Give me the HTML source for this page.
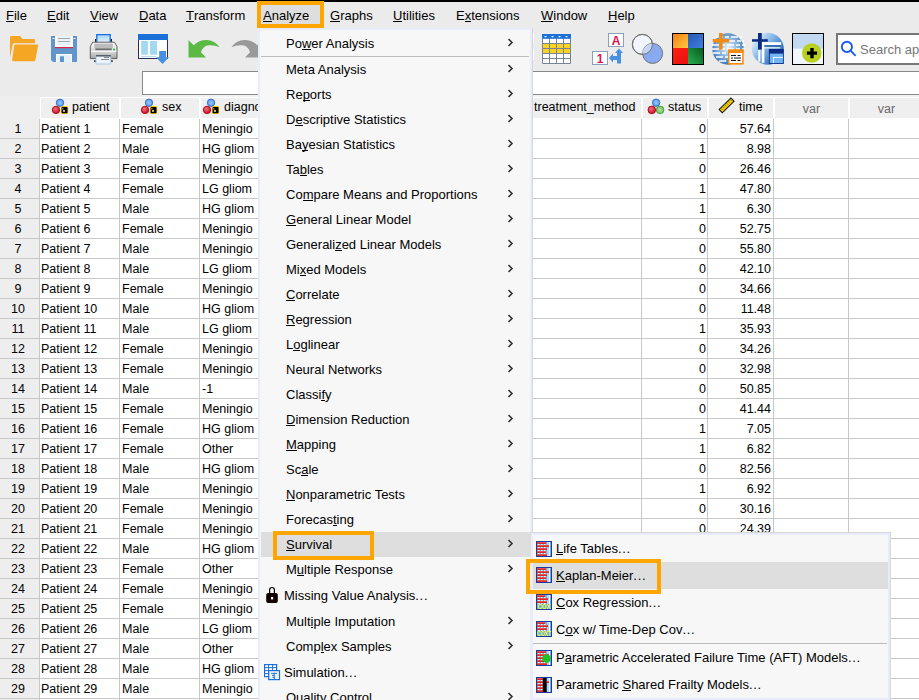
<!DOCTYPE html>
<html><head><meta charset="utf-8"><style>
*{box-sizing:border-box}
html,body{margin:0;padding:0}
body{width:919px;height:700px;overflow:hidden;position:relative;background:#ebebeb;font-family:"Liberation Sans",sans-serif;color:#000}
.a{position:absolute}
u{text-decoration:none;position:relative}u::after{content:"";position:absolute;left:0;right:0;height:1px;background:#000;top:13px}
.mb{position:absolute;top:8px;font-size:13px;line-height:15px;white-space:nowrap}
.gl{position:absolute;background:#c8c8c8}
.c{position:absolute;font-size:12.5px;line-height:14px;white-space:nowrap}
.hd{position:absolute;top:98px;height:20px;background:#efefef}
.mi{position:absolute;left:286px;font-size:13px;line-height:15px;white-space:nowrap}
.ch{position:absolute;left:507px;width:7px;height:9px}
.si{position:absolute;left:556px;font-size:13px;line-height:15px;white-space:nowrap}
</style></head><body>
<div class="a" style="left:0;top:0;width:919px;height:2px;background:#000"></div>

<div class="mb" style="left:6px"><u>F</u>ile</div>
<div class="mb" style="left:47px"><u>E</u>dit</div>
<div class="mb" style="left:90px"><u>V</u>iew</div>
<div class="mb" style="left:139px"><u>D</u>ata</div>
<div class="mb" style="left:186px"><u>T</u>ransform</div>
<div class="mb" style="left:330px"><u>G</u>raphs</div>
<div class="mb" style="left:393px"><u>U</u>tilities</div>
<div class="mb" style="left:456px">E<u>x</u>tensions</div>
<div class="mb" style="left:541px"><u>W</u>indow</div>
<div class="mb" style="left:608px"><u>H</u>elp</div>
<div class="a" style="left:257px;top:1px;width:67px;height:27px;border:4px solid #ffa500;background:#dedede"></div>
<div class="mb" style="left:263px"><u>A</u>nalyze</div>

<svg class="a" style="left:0;top:0" width="919" height="100" viewBox="0 0 919 100">
<defs>
<linearGradient id="pg" x1="0" y1="0" x2="0" y2="1"><stop offset="0" stop-color="#9fd0f8"/><stop offset="1" stop-color="#f4faff"/></linearGradient>
<linearGradient id="pb" x1="0" y1="0" x2="0" y2="1"><stop offset="0" stop-color="#fcfcfc"/><stop offset="0.45" stop-color="#e0e0e0"/><stop offset="0.6" stop-color="#d4d4d4"/><stop offset="1" stop-color="#a4a4a4"/></linearGradient>
<linearGradient id="g1" x1="0" y1="0" x2="1" y2="1"><stop offset="0" stop-color="#f08010"/><stop offset="1" stop-color="#ffc840"/></linearGradient>
<linearGradient id="g2" x1="0" y1="0" x2="1" y2="1"><stop offset="0" stop-color="#2858b0"/><stop offset="1" stop-color="#3c80e0"/></linearGradient>
<linearGradient id="g3" x1="0" y1="0" x2="1" y2="1"><stop offset="0" stop-color="#ff2010"/><stop offset="1" stop-color="#e81010"/></linearGradient>
<linearGradient id="g4" x1="0" y1="1" x2="1" y2="0"><stop offset="0" stop-color="#28b050"/><stop offset="1" stop-color="#0a5a20"/></linearGradient>
<radialGradient id="gl1" cx="0.5" cy="0.45" r="0.6"><stop offset="0" stop-color="#e8f2fc"/><stop offset="0.6" stop-color="#7aa8d8"/><stop offset="1" stop-color="#2a64a8"/></radialGradient>
<linearGradient id="gl2" x1="0.1" y1="0.2" x2="0.9" y2="0.8"><stop offset="0" stop-color="#d8ecfc"/><stop offset="0.45" stop-color="#7cb0e4"/><stop offset="1" stop-color="#2060b0"/></linearGradient>
<radialGradient id="bb" cx="0.35" cy="0.3" r="0.7"><stop offset="0" stop-color="#c8e4ff"/><stop offset="1" stop-color="#3c7ed8"/></radialGradient>
<radialGradient id="rb" cx="0.35" cy="0.3" r="0.7"><stop offset="0" stop-color="#ff8080"/><stop offset="1" stop-color="#c01018"/></radialGradient>
<radialGradient id="gb" cx="0.35" cy="0.3" r="0.7"><stop offset="0" stop-color="#b8f0a0"/><stop offset="1" stop-color="#40a030"/></radialGradient>
</defs>
<!-- folder -->
<path d="M10 37.2 Q10 36 11.2 36 L19.5 36 Q20.3 36 20.8 36.8 L22.3 39 L33.8 39 Q35 39 35 40.2 L35 43.2 L14.2 43.2 Q13 43.2 12.7 44.4 L10 57.5 Z" fill="#f5a623"/>
<path d="M15.3 44.6 L37.2 44.6 Q38.3 44.6 38.1 45.7 L35.4 60 Q35.2 61.2 34 61.2 L13 61.2 Q11.9 61.2 12.1 60.1 L14.2 45.6 Q14.4 44.6 15.3 44.6 Z" fill="#f5a623"/>
<!-- save -->
<path d="M51 36 L77 36 L77 62 L53 62 L51 60 Z" fill="#6096cc"/>
<rect x="55" y="36" width="18" height="11.3" fill="#fff"/>
<rect x="57" y="36" width="14" height="9.5" fill="#e8f2fc"/>
<rect x="58" y="38" width="12" height="1" fill="#a8a8a8"/>
<rect x="58" y="41" width="12" height="1" fill="#a8a8a8"/>
<rect x="55" y="47" width="18" height="1.2" fill="#d8284a"/>
<rect x="52.5" y="38" width="2" height="1" fill="#e8f0f8"/>
<rect x="73.5" y="38" width="2" height="1" fill="#e8f0f8"/>
<rect x="56" y="54" width="16" height="8" fill="#fff"/>
<rect x="57" y="55" width="14" height="7" fill="#e4f0fc"/>
<rect x="60" y="56.3" width="4" height="5.7" fill="#5d94cc"/>
<!-- printer -->
<rect x="95" y="39" width="17" height="2.7" fill="#111"/>
<rect x="96.2" y="34.2" width="14.4" height="10" fill="url(#pg)"/>
<path d="M96.8 44 V34.7 H110.2 V44" fill="none" stroke="#1070e0" stroke-width="1.3"/>
<path d="M92.6 42.2 L114.5 42.2 L117 46.6 L117 58.6 L90.3 58.6 L90.3 46.6 Z" fill="url(#pb)" stroke="#505050" stroke-width="0.9" stroke-linejoin="round"/>
<rect x="94.3" y="43.6" width="18.5" height="4.4" fill="#bcbcbc"/>
<rect x="91" y="48.3" width="4.3" height="2" fill="#dadada"/>
<rect x="95.3" y="48.3" width="16.5" height="2" fill="#707070"/>
<rect x="113" y="48.6" width="2" height="1.9" fill="#30c040"/>
<rect x="91" y="50.7" width="25.5" height="1.2" fill="#fafafa"/>
<rect x="94" y="60.4" width="1.8" height="1.4" fill="#111"/>
<rect x="111" y="60.4" width="1.8" height="1.4" fill="#111"/>
<rect x="96" y="55.3" width="14.8" height="8.7" fill="#eaf4fc" stroke="#a0c0e0" stroke-width="0.8"/>
<rect x="96" y="55.2" width="14.8" height="1.3" fill="#404850"/>
<rect x="104" y="57" width="5" height="0.9" fill="#7a7a7a"/>
<rect x="101.1" y="59" width="7.8" height="0.9" fill="#7a7a7a"/>
<!-- data editor -->
<rect x="138.5" y="39.5" width="29" height="19" fill="#fbfdfd" stroke="#2e2a5e" stroke-width="1"/>
<rect x="138" y="34" width="30" height="6" fill="#1a6fd8"/>
<rect x="141.2" y="41" width="6.7" height="13.7" fill="#a2d8f0"/>
<rect x="150" y="41" width="7" height="13.7" fill="#a2d8f0"/>
<rect x="141.2" y="56.2" width="15" height="0.9" fill="#a2d8f0"/>
<path d="M159.2 51 L166 51 L166 57.3 L169 57.3 L162.5 64 L156 57.3 L159.2 57.3 Z" fill="#4a90e2"/>
<!-- undo -->
<path d="M188.5 40.3 L193.8 45.2 C197 41.8 201.5 40 206.5 40 C211.8 40 216.8 43 219.5 47.3 C215.5 45.3 211 44.6 207 45.6 C204 46.4 202 49 201 52.3 L206 57.6 L188.5 57.6 Z" fill="#5cb946"/>
<!-- redo -->
<path d="M262.5 40.3 L257.2 45.2 C254 41.8 249.5 40 244.5 40 C239.2 40 234.2 43 231.5 47.3 C235.5 45.3 240 44.6 244 45.6 C247 46.4 249 49 250 52.3 L245 57.6 L262.5 57.6 Z" fill="#999"/>
<!-- table icon -->
<rect x="542" y="34" width="29" height="30" fill="#fff"/>
<g fill="#f9d423"><rect x="543" y="44" width="6" height="4"/><rect x="550" y="44" width="6" height="4"/><rect x="557" y="44" width="6" height="4"/><rect x="564" y="44" width="6" height="4"/>
<rect x="543" y="49" width="6" height="4"/><rect x="550" y="49" width="6" height="4"/><rect x="557" y="49" width="6" height="4"/><rect x="564" y="49" width="6" height="4"/></g>
<g stroke="#7a8494" stroke-width="1" fill="none">
<path d="M542.5 38.5 V63.5 H570.5 V38.5 M549.5 38.5 V63.5 M556.5 38.5 V63.5 M563.5 38.5 V63.5 M542.5 43.5 H570.5 M542.5 48.5 H570.5 M542.5 53.5 H570.5 M542.5 58.5 H570.5"/></g>
<rect x="542" y="34" width="29" height="4.8" fill="#1a6fd8"/>
<g fill="#fff"><path d="M544 36 h3 l-1.5 1.5z"/><path d="M551 36 h3 l-1.5 1.5z"/><path d="M558 36 h3 l-1.5 1.5z"/><path d="M565 36 h3 l-1.5 1.5z"/></g>
<!-- 1/A -->
<rect x="608.5" y="33.5" width="15" height="13" fill="#fff" stroke="#8aa0b8"/>
<text x="616" y="44.5" font-family="Liberation Sans" font-weight="bold" font-size="12" fill="#dc1450" text-anchor="middle">A</text>
<rect x="592.5" y="51.5" width="15" height="13" fill="#fff" stroke="#8aa0b8"/>
<text x="600" y="62.5" font-family="Liberation Sans" font-weight="bold" font-size="12" fill="#dc1450" text-anchor="middle">1</text>
<path d="M619 48.5 L623 53 L621 53 L621 63.5 L617 63.5 L617 60 L613 60 L613 62.5 L609 58 L613 53.5 L613 56 L617 56 L617 53 L615 53 Z" fill="#4a90e2"/>
<!-- venn -->
<circle cx="642.4" cy="44.4" r="10" fill="#f2f5fc" stroke="#707070" stroke-width="1"/>
<circle cx="652.6" cy="53.4" r="10" fill="#88aaee" stroke="#707070" stroke-width="1"/>
<path d="M642.65 54.4 A10 10 0 0 1 652.35 43.4 A10 10 0 0 1 642.65 54.4 Z" fill="#c4d6f4"/>
<circle cx="642.4" cy="44.4" r="10" fill="none" stroke="#707070" stroke-width="1"/>
<!-- colors -->
<rect x="672" y="33" width="32" height="32" fill="#000"/>
<rect x="673" y="34" width="15" height="14" fill="url(#g1)"/>
<rect x="688" y="34" width="15" height="14" fill="url(#g2)"/>
<rect x="673" y="48" width="15" height="16" fill="url(#g3)"/>
<rect x="688" y="48" width="15" height="16" fill="url(#g4)"/>
<!-- globe 1 -->
<circle cx="728" cy="49" r="15.7" fill="url(#gl1)"/>
<g stroke="#fff" stroke-width="1.3" stroke-dasharray="7 2 4 2">
<path d="M716 37 H742 M713 41 H744 M712 45 H745 M712 49 H745 M713 53 H744 M716 57 H741 M719 61 H737"/></g>
<rect x="719" y="33" width="3.6" height="16.5" fill="#f58a10"/>
<rect x="712.8" y="39" width="16.5" height="3.4" fill="#f58a10"/>
<rect x="728" y="49.3" width="15.7" height="15.3" fill="#f58a10"/>
<rect x="729.5" y="53" width="12.7" height="10" fill="#fff"/>
<g fill="#111"><rect x="731" y="55" width="5" height="1"/><rect x="737.5" y="55" width="3" height="1"/><rect x="731" y="57.5" width="2" height="1"/><rect x="734" y="57.5" width="7" height="1"/><rect x="731" y="60" width="5" height="1"/><rect x="737.5" y="60" width="3" height="1"/></g>
<!-- globe 2 -->
<circle cx="767.8" cy="48.7" r="16" fill="url(#gl2)"/>
<rect x="758.3" y="50" width="2" height="11.5" fill="#fff"/>
<rect x="761.8" y="42.2" width="19.4" height="2.8" fill="#fff"/>
<rect x="761.8" y="42.2" width="2.6" height="20.6" fill="#fff"/>
<rect x="764.4" y="45.2" width="16.6" height="1.5" fill="#2c64b0"/>
<rect x="764.4" y="47.3" width="16" height="1.1" fill="#fff"/>
<rect x="758" y="33" width="3.8" height="16.5" fill="#0c2c84"/>
<rect x="752" y="39.2" width="15.8" height="2.5" fill="#0c2c84"/>
<rect x="768.9" y="49" width="14.9" height="15" fill="#0c2c84"/>
<rect x="769.8" y="53.6" width="13.1" height="9.5" fill="#70b4f4"/>
<rect x="773" y="56.9" width="9.9" height="1.1" fill="#e8f4ff"/>
<rect x="773" y="56.9" width="1" height="6.2" fill="#e8f4ff"/>
<!-- add -->
<rect x="792.5" y="33.5" width="31" height="31" fill="#f0f6fc" stroke="#000"/>
<rect x="793" y="34" width="30" height="14.6" fill="#c2d8f0"/>
<circle cx="811.8" cy="53" r="9.8" fill="#b8d020"/>
<path d="M810.3 48 h3.4 v3.4 h3.4 v3.4 h-3.4 v3.4 h-3.4 v-3.4 h-3.4 v-3.4 h3.4 Z" fill="#000"/>
<!-- search -->
<rect x="837" y="34" width="90" height="30" fill="#fff" stroke="#777" stroke-width="2"/>
<circle cx="846.9" cy="46.9" r="5.1" fill="none" stroke="#1a5cf0" stroke-width="1.9"/>
<path d="M850.6 50.6 L855.6 55.8" stroke="#1a5cf0" stroke-width="1.9"/>
</svg>

<div class="a" style="left:533px;top:33px;width:1px;height:10px;background:#fff"></div>
<div class="a" style="left:533px;top:49px;width:1px;height:11px;background:#fff"></div>
<div class="a" style="left:860px;top:42px;font-size:13px;line-height:15px;color:#777;white-space:nowrap">Search ap</div>
<div class="a" style="left:142px;top:71px;width:800px;height:24px;background:#fff;border:1px solid #888;border-right:none"></div>
<div class="a" style="left:143px;top:95px;width:776px;height:2px;background:#f2f2f2"></div>
<div class="a" style="left:0;top:96px;width:40px;height:604px;background:#eeeeee"></div>
<div class="a" style="left:40px;top:97px;width:879px;height:603px;background:#fff"></div>
<div class="hd" style="left:41px;width:78px"></div>
<div class="hd" style="left:121px;width:78px"></div>
<div class="hd" style="left:201px;width:78px"></div>
<div class="hd" style="left:281px;width:360px"></div>
<div class="hd" style="left:643px;width:64px"></div>
<div class="hd" style="left:709px;width:64px"></div>
<div class="hd" style="left:775px;width:73px"></div>
<div class="hd" style="left:850px;width:80px"></div>
<div class="c" style="left:72px;top:100px">patient</div>
<div class="c" style="left:162px;top:100px">sex</div>
<div class="c" style="left:224px;top:100px">diagnosis</div>
<div class="c" style="left:534px;top:100px">treatment_method</div>
<div class="c" style="left:668px;top:100px">status</div>
<div class="c" style="left:739px;top:100px">time</div>
<div class="c" style="left:775px;width:73px;text-align:center;top:102px;color:#6a6a6a">var</div>
<div class="c" style="left:850px;width:73px;text-align:center;top:102px;color:#6a6a6a">var</div>

<svg class="a" style="left:0;top:0" width="919" height="120" viewBox="0 0 919 120">
<defs>
<radialGradient id="hbb" cx="0.5" cy="0.5" r="0.5"><stop offset="0" stop-color="#9cc8f8"/><stop offset="1" stop-color="#5a98e8"/></radialGradient>
<radialGradient id="hrb" cx="0.4" cy="0.35" r="0.6"><stop offset="0" stop-color="#f07080"/><stop offset="1" stop-color="#d01828"/></radialGradient>
<radialGradient id="hgb" cx="0.5" cy="0.5" r="0.5"><stop offset="0" stop-color="#b0e0a0"/><stop offset="1" stop-color="#78c060"/></radialGradient>

</defs>
<g transform="translate(60 102.8)">
<circle cx="0" cy="0" r="3.7" fill="url(#hbb)" stroke="#2f6cc8" stroke-width="0.9"/>
<circle cx="-4" cy="7.1" r="3.7" fill="url(#hrb)" stroke="#a80818" stroke-width="0.9"/>
<rect x="0.8" y="3.3" width="7.4" height="7.8" rx="1.6" fill="#f8c800"/>
<rect x="1.6" y="4.2" width="5.9" height="6.3" rx="0.8" fill="#000"/>
<rect x="3.2" y="7.1" width="1.6" height="2" fill="#f8f080"/>
<rect x="2.2" y="5.6" width="1.2" height="0.9" fill="#f8f080"/>
</g>
<g transform="translate(149 102.8)">
<circle cx="0" cy="0" r="3.7" fill="url(#hbb)" stroke="#2f6cc8" stroke-width="0.9"/>
<circle cx="-4" cy="7.1" r="3.7" fill="url(#hrb)" stroke="#a80818" stroke-width="0.9"/>
<rect x="0.8" y="3.3" width="7.4" height="7.8" rx="1.6" fill="#f8c800"/>
<rect x="1.6" y="4.2" width="5.9" height="6.3" rx="0.8" fill="#000"/>
<rect x="3.2" y="7.1" width="1.6" height="2" fill="#f8f080"/>
<rect x="2.2" y="5.6" width="1.2" height="0.9" fill="#f8f080"/>
</g>
<g transform="translate(211 102.8)">
<circle cx="0" cy="0" r="3.7" fill="url(#hbb)" stroke="#2f6cc8" stroke-width="0.9"/>
<circle cx="-4" cy="7.1" r="3.7" fill="url(#hrb)" stroke="#a80818" stroke-width="0.9"/>
<rect x="0.8" y="3.3" width="7.4" height="7.8" rx="1.6" fill="#f8c800"/>
<rect x="1.6" y="4.2" width="5.9" height="6.3" rx="0.8" fill="#000"/>
<rect x="3.2" y="7.1" width="1.6" height="2" fill="#f8f080"/>
<rect x="2.2" y="5.6" width="1.2" height="0.9" fill="#f8f080"/>
</g>
<circle cx="656.1" cy="102.7" r="3.7" fill="url(#hbb)" stroke="#2f6cc8" stroke-width="0.9"/>
<circle cx="651.8" cy="109.9" r="3.8" fill="url(#hrb)" stroke="#a80818" stroke-width="0.9"/>
<circle cx="660.1" cy="109.9" r="3.8" fill="url(#hgb)" stroke="#3c9c3c" stroke-width="0.9"/>
<g transform="translate(726.6 105.4) rotate(-44)">
<rect x="-8.2" y="-2.3" width="16.4" height="4.6" fill="#f8c800" stroke="#111" stroke-width="1"/>
<path d="M-6 -1.8 V0.3 M-3.5 -1.8 V0.3 M-1 -1.8 V0.3 M1.5 -1.8 V0.3 M4 -1.8 V0.3 M6.5 -1.8 V0.3" stroke="#6a7a30" stroke-width="0.9"/>
</g>
</svg>

<div class="gl" style="left:39px;top:119px;width:1px;height:581px"></div>
<div class="gl" style="left:119px;top:119px;width:1px;height:581px"></div>
<div class="gl" style="left:199px;top:119px;width:1px;height:581px"></div>
<div class="gl" style="left:279px;top:119px;width:1px;height:581px"></div>
<div class="gl" style="left:641px;top:119px;width:1px;height:581px"></div>
<div class="gl" style="left:707px;top:119px;width:1px;height:581px"></div>
<div class="gl" style="left:773px;top:119px;width:1px;height:581px"></div>
<div class="gl" style="left:848px;top:119px;width:1px;height:581px"></div>
<div class="gl" style="left:0;top:138px;width:919px;height:1px"></div>
<div class="gl" style="left:0;top:158px;width:919px;height:1px"></div>
<div class="gl" style="left:0;top:178px;width:919px;height:1px"></div>
<div class="gl" style="left:0;top:198px;width:919px;height:1px"></div>
<div class="gl" style="left:0;top:218px;width:919px;height:1px"></div>
<div class="gl" style="left:0;top:238px;width:919px;height:1px"></div>
<div class="gl" style="left:0;top:258px;width:919px;height:1px"></div>
<div class="gl" style="left:0;top:278px;width:919px;height:1px"></div>
<div class="gl" style="left:0;top:298px;width:919px;height:1px"></div>
<div class="gl" style="left:0;top:318px;width:919px;height:1px"></div>
<div class="gl" style="left:0;top:338px;width:919px;height:1px"></div>
<div class="gl" style="left:0;top:358px;width:919px;height:1px"></div>
<div class="gl" style="left:0;top:378px;width:919px;height:1px"></div>
<div class="gl" style="left:0;top:398px;width:919px;height:1px"></div>
<div class="gl" style="left:0;top:418px;width:919px;height:1px"></div>
<div class="gl" style="left:0;top:438px;width:919px;height:1px"></div>
<div class="gl" style="left:0;top:458px;width:919px;height:1px"></div>
<div class="gl" style="left:0;top:478px;width:919px;height:1px"></div>
<div class="gl" style="left:0;top:498px;width:919px;height:1px"></div>
<div class="gl" style="left:0;top:518px;width:919px;height:1px"></div>
<div class="gl" style="left:0;top:538px;width:919px;height:1px"></div>
<div class="gl" style="left:0;top:558px;width:919px;height:1px"></div>
<div class="gl" style="left:0;top:578px;width:919px;height:1px"></div>
<div class="gl" style="left:0;top:598px;width:919px;height:1px"></div>
<div class="gl" style="left:0;top:618px;width:919px;height:1px"></div>
<div class="gl" style="left:0;top:638px;width:919px;height:1px"></div>
<div class="gl" style="left:0;top:658px;width:919px;height:1px"></div>
<div class="gl" style="left:0;top:678px;width:919px;height:1px"></div>
<div class="gl" style="left:0;top:698px;width:919px;height:1px"></div>
<div class="c" style="left:0;width:36px;text-align:center;top:122px">1</div>
<div class="c" style="left:41px;top:122px">Patient 1</div>
<div class="c" style="left:122px;top:122px">Female</div>
<div class="c" style="left:202px;top:122px">Meningio</div>
<div class="c" style="left:643px;width:63px;text-align:right;top:122px">0</div>
<div class="c" style="left:708px;width:63px;text-align:right;top:122px">57.64</div>
<div class="c" style="left:0;width:36px;text-align:center;top:142px">2</div>
<div class="c" style="left:41px;top:142px">Patient 2</div>
<div class="c" style="left:122px;top:142px">Male</div>
<div class="c" style="left:202px;top:142px">HG gliom</div>
<div class="c" style="left:643px;width:63px;text-align:right;top:142px">1</div>
<div class="c" style="left:708px;width:63px;text-align:right;top:142px">8.98</div>
<div class="c" style="left:0;width:36px;text-align:center;top:162px">3</div>
<div class="c" style="left:41px;top:162px">Patient 3</div>
<div class="c" style="left:122px;top:162px">Female</div>
<div class="c" style="left:202px;top:162px">Meningio</div>
<div class="c" style="left:643px;width:63px;text-align:right;top:162px">0</div>
<div class="c" style="left:708px;width:63px;text-align:right;top:162px">26.46</div>
<div class="c" style="left:0;width:36px;text-align:center;top:182px">4</div>
<div class="c" style="left:41px;top:182px">Patient 4</div>
<div class="c" style="left:122px;top:182px">Female</div>
<div class="c" style="left:202px;top:182px">LG gliom</div>
<div class="c" style="left:643px;width:63px;text-align:right;top:182px">1</div>
<div class="c" style="left:708px;width:63px;text-align:right;top:182px">47.80</div>
<div class="c" style="left:0;width:36px;text-align:center;top:202px">5</div>
<div class="c" style="left:41px;top:202px">Patient 5</div>
<div class="c" style="left:122px;top:202px">Male</div>
<div class="c" style="left:202px;top:202px">HG gliom</div>
<div class="c" style="left:643px;width:63px;text-align:right;top:202px">1</div>
<div class="c" style="left:708px;width:63px;text-align:right;top:202px">6.30</div>
<div class="c" style="left:0;width:36px;text-align:center;top:222px">6</div>
<div class="c" style="left:41px;top:222px">Patient 6</div>
<div class="c" style="left:122px;top:222px">Female</div>
<div class="c" style="left:202px;top:222px">Meningio</div>
<div class="c" style="left:643px;width:63px;text-align:right;top:222px">0</div>
<div class="c" style="left:708px;width:63px;text-align:right;top:222px">52.75</div>
<div class="c" style="left:0;width:36px;text-align:center;top:242px">7</div>
<div class="c" style="left:41px;top:242px">Patient 7</div>
<div class="c" style="left:122px;top:242px">Male</div>
<div class="c" style="left:202px;top:242px">Meningio</div>
<div class="c" style="left:643px;width:63px;text-align:right;top:242px">0</div>
<div class="c" style="left:708px;width:63px;text-align:right;top:242px">55.80</div>
<div class="c" style="left:0;width:36px;text-align:center;top:262px">8</div>
<div class="c" style="left:41px;top:262px">Patient 8</div>
<div class="c" style="left:122px;top:262px">Male</div>
<div class="c" style="left:202px;top:262px">LG gliom</div>
<div class="c" style="left:643px;width:63px;text-align:right;top:262px">0</div>
<div class="c" style="left:708px;width:63px;text-align:right;top:262px">42.10</div>
<div class="c" style="left:0;width:36px;text-align:center;top:282px">9</div>
<div class="c" style="left:41px;top:282px">Patient 9</div>
<div class="c" style="left:122px;top:282px">Female</div>
<div class="c" style="left:202px;top:282px">Meningio</div>
<div class="c" style="left:643px;width:63px;text-align:right;top:282px">0</div>
<div class="c" style="left:708px;width:63px;text-align:right;top:282px">34.66</div>
<div class="c" style="left:0;width:36px;text-align:center;top:302px">10</div>
<div class="c" style="left:41px;top:302px">Patient 10</div>
<div class="c" style="left:122px;top:302px">Male</div>
<div class="c" style="left:202px;top:302px">HG gliom</div>
<div class="c" style="left:643px;width:63px;text-align:right;top:302px">0</div>
<div class="c" style="left:708px;width:63px;text-align:right;top:302px">11.48</div>
<div class="c" style="left:0;width:36px;text-align:center;top:322px">11</div>
<div class="c" style="left:41px;top:322px">Patient 11</div>
<div class="c" style="left:122px;top:322px">Male</div>
<div class="c" style="left:202px;top:322px">LG gliom</div>
<div class="c" style="left:643px;width:63px;text-align:right;top:322px">1</div>
<div class="c" style="left:708px;width:63px;text-align:right;top:322px">35.93</div>
<div class="c" style="left:0;width:36px;text-align:center;top:342px">12</div>
<div class="c" style="left:41px;top:342px">Patient 12</div>
<div class="c" style="left:122px;top:342px">Female</div>
<div class="c" style="left:202px;top:342px">Meningio</div>
<div class="c" style="left:643px;width:63px;text-align:right;top:342px">0</div>
<div class="c" style="left:708px;width:63px;text-align:right;top:342px">34.26</div>
<div class="c" style="left:0;width:36px;text-align:center;top:362px">13</div>
<div class="c" style="left:41px;top:362px">Patient 13</div>
<div class="c" style="left:122px;top:362px">Female</div>
<div class="c" style="left:202px;top:362px">Meningio</div>
<div class="c" style="left:643px;width:63px;text-align:right;top:362px">0</div>
<div class="c" style="left:708px;width:63px;text-align:right;top:362px">32.98</div>
<div class="c" style="left:0;width:36px;text-align:center;top:382px">14</div>
<div class="c" style="left:41px;top:382px">Patient 14</div>
<div class="c" style="left:122px;top:382px">Male</div>
<div class="c" style="left:202px;top:382px">-1</div>
<div class="c" style="left:643px;width:63px;text-align:right;top:382px">0</div>
<div class="c" style="left:708px;width:63px;text-align:right;top:382px">50.85</div>
<div class="c" style="left:0;width:36px;text-align:center;top:402px">15</div>
<div class="c" style="left:41px;top:402px">Patient 15</div>
<div class="c" style="left:122px;top:402px">Female</div>
<div class="c" style="left:202px;top:402px">Meningio</div>
<div class="c" style="left:643px;width:63px;text-align:right;top:402px">0</div>
<div class="c" style="left:708px;width:63px;text-align:right;top:402px">41.44</div>
<div class="c" style="left:0;width:36px;text-align:center;top:422px">16</div>
<div class="c" style="left:41px;top:422px">Patient 16</div>
<div class="c" style="left:122px;top:422px">Female</div>
<div class="c" style="left:202px;top:422px">HG gliom</div>
<div class="c" style="left:643px;width:63px;text-align:right;top:422px">1</div>
<div class="c" style="left:708px;width:63px;text-align:right;top:422px">7.05</div>
<div class="c" style="left:0;width:36px;text-align:center;top:442px">17</div>
<div class="c" style="left:41px;top:442px">Patient 17</div>
<div class="c" style="left:122px;top:442px">Female</div>
<div class="c" style="left:202px;top:442px">Other</div>
<div class="c" style="left:643px;width:63px;text-align:right;top:442px">1</div>
<div class="c" style="left:708px;width:63px;text-align:right;top:442px">6.82</div>
<div class="c" style="left:0;width:36px;text-align:center;top:462px">18</div>
<div class="c" style="left:41px;top:462px">Patient 18</div>
<div class="c" style="left:122px;top:462px">Male</div>
<div class="c" style="left:202px;top:462px">HG gliom</div>
<div class="c" style="left:643px;width:63px;text-align:right;top:462px">0</div>
<div class="c" style="left:708px;width:63px;text-align:right;top:462px">82.56</div>
<div class="c" style="left:0;width:36px;text-align:center;top:482px">19</div>
<div class="c" style="left:41px;top:482px">Patient 19</div>
<div class="c" style="left:122px;top:482px">Male</div>
<div class="c" style="left:202px;top:482px">Meningio</div>
<div class="c" style="left:643px;width:63px;text-align:right;top:482px">1</div>
<div class="c" style="left:708px;width:63px;text-align:right;top:482px">6.92</div>
<div class="c" style="left:0;width:36px;text-align:center;top:502px">20</div>
<div class="c" style="left:41px;top:502px">Patient 20</div>
<div class="c" style="left:122px;top:502px">Female</div>
<div class="c" style="left:202px;top:502px">Meningio</div>
<div class="c" style="left:643px;width:63px;text-align:right;top:502px">0</div>
<div class="c" style="left:708px;width:63px;text-align:right;top:502px">30.16</div>
<div class="c" style="left:0;width:36px;text-align:center;top:522px">21</div>
<div class="c" style="left:41px;top:522px">Patient 21</div>
<div class="c" style="left:122px;top:522px">Female</div>
<div class="c" style="left:202px;top:522px">Meningio</div>
<div class="c" style="left:643px;width:63px;text-align:right;top:522px">0</div>
<div class="c" style="left:708px;width:63px;text-align:right;top:522px">24.39</div>
<div class="c" style="left:0;width:36px;text-align:center;top:542px">22</div>
<div class="c" style="left:41px;top:542px">Patient 22</div>
<div class="c" style="left:122px;top:542px">Male</div>
<div class="c" style="left:202px;top:542px">HG gliom</div>
<div class="c" style="left:0;width:36px;text-align:center;top:562px">23</div>
<div class="c" style="left:41px;top:562px">Patient 23</div>
<div class="c" style="left:122px;top:562px">Female</div>
<div class="c" style="left:202px;top:562px">Other</div>
<div class="c" style="left:0;width:36px;text-align:center;top:582px">24</div>
<div class="c" style="left:41px;top:582px">Patient 24</div>
<div class="c" style="left:122px;top:582px">Female</div>
<div class="c" style="left:202px;top:582px">Meningio</div>
<div class="c" style="left:0;width:36px;text-align:center;top:602px">25</div>
<div class="c" style="left:41px;top:602px">Patient 25</div>
<div class="c" style="left:122px;top:602px">Female</div>
<div class="c" style="left:202px;top:602px">Meningio</div>
<div class="c" style="left:0;width:36px;text-align:center;top:622px">26</div>
<div class="c" style="left:41px;top:622px">Patient 26</div>
<div class="c" style="left:122px;top:622px">Male</div>
<div class="c" style="left:202px;top:622px">LG gliom</div>
<div class="c" style="left:0;width:36px;text-align:center;top:642px">27</div>
<div class="c" style="left:41px;top:642px">Patient 27</div>
<div class="c" style="left:122px;top:642px">Male</div>
<div class="c" style="left:202px;top:642px">Other</div>
<div class="c" style="left:0;width:36px;text-align:center;top:662px">28</div>
<div class="c" style="left:41px;top:662px">Patient 28</div>
<div class="c" style="left:122px;top:662px">Male</div>
<div class="c" style="left:202px;top:662px">HG gliom</div>
<div class="c" style="left:0;width:36px;text-align:center;top:682px">29</div>
<div class="c" style="left:41px;top:682px">Patient 29</div>
<div class="c" style="left:122px;top:682px">Male</div>
<div class="c" style="left:202px;top:682px">Meningio</div>
<div class="a" style="left:258px;top:28px;width:274px;height:680px;background:#f7f7f7;border:2px solid #e8ecfc"></div>
<div class="a" style="left:532px;top:28px;width:1px;height:672px;background:#d6d6d6"></div>
<div class="a" style="left:261px;top:532px;width:270px;height:25px;background:#dedede"></div>
<div class="a" style="left:273px;top:531px;width:101px;height:29px;border:4px solid #ffa500"></div>
<div class="mi" style="left:286px;top:36px">Po<u>w</u>er Analysis</div>
<svg class="ch" style="top:38px" viewBox="0 0 7 9"><path d="M1.5 1 L5 4.5 L1.5 8" fill="none" stroke="#333" stroke-width="1.6"/></svg>
<div class="a" style="left:261px;top:56px;width:268px;height:1px;background:#bdbdbd"></div>
<div class="mi" style="left:286px;top:62px">Meta Analysis</div>
<svg class="ch" style="top:64px" viewBox="0 0 7 9"><path d="M1.5 1 L5 4.5 L1.5 8" fill="none" stroke="#333" stroke-width="1.6"/></svg>
<div class="mi" style="left:286px;top:87px">Re<u>p</u>orts</div>
<svg class="ch" style="top:89px" viewBox="0 0 7 9"><path d="M1.5 1 L5 4.5 L1.5 8" fill="none" stroke="#333" stroke-width="1.6"/></svg>
<div class="mi" style="left:286px;top:112px">D<u>e</u>scriptive Statistics</div>
<svg class="ch" style="top:114px" viewBox="0 0 7 9"><path d="M1.5 1 L5 4.5 L1.5 8" fill="none" stroke="#333" stroke-width="1.6"/></svg>
<div class="mi" style="left:286px;top:137px">Ba<u>y</u>esian Statistics</div>
<svg class="ch" style="top:139px" viewBox="0 0 7 9"><path d="M1.5 1 L5 4.5 L1.5 8" fill="none" stroke="#333" stroke-width="1.6"/></svg>
<div class="mi" style="left:286px;top:162px">Ta<u>b</u>les</div>
<svg class="ch" style="top:164px" viewBox="0 0 7 9"><path d="M1.5 1 L5 4.5 L1.5 8" fill="none" stroke="#333" stroke-width="1.6"/></svg>
<div class="mi" style="left:286px;top:187px">Co<u>m</u>pare Means and Proportions</div>
<svg class="ch" style="top:189px" viewBox="0 0 7 9"><path d="M1.5 1 L5 4.5 L1.5 8" fill="none" stroke="#333" stroke-width="1.6"/></svg>
<div class="mi" style="left:286px;top:212px"><u>G</u>eneral Linear Model</div>
<svg class="ch" style="top:214px" viewBox="0 0 7 9"><path d="M1.5 1 L5 4.5 L1.5 8" fill="none" stroke="#333" stroke-width="1.6"/></svg>
<div class="mi" style="left:286px;top:237px">Generali<u>z</u>ed Linear Models</div>
<svg class="ch" style="top:239px" viewBox="0 0 7 9"><path d="M1.5 1 L5 4.5 L1.5 8" fill="none" stroke="#333" stroke-width="1.6"/></svg>
<div class="mi" style="left:286px;top:262px">Mi<u>x</u>ed Models</div>
<svg class="ch" style="top:264px" viewBox="0 0 7 9"><path d="M1.5 1 L5 4.5 L1.5 8" fill="none" stroke="#333" stroke-width="1.6"/></svg>
<div class="mi" style="left:286px;top:287px"><u>C</u>orrelate</div>
<svg class="ch" style="top:289px" viewBox="0 0 7 9"><path d="M1.5 1 L5 4.5 L1.5 8" fill="none" stroke="#333" stroke-width="1.6"/></svg>
<div class="mi" style="left:286px;top:312px"><u>R</u>egression</div>
<svg class="ch" style="top:314px" viewBox="0 0 7 9"><path d="M1.5 1 L5 4.5 L1.5 8" fill="none" stroke="#333" stroke-width="1.6"/></svg>
<div class="mi" style="left:286px;top:337px">L<u>o</u>glinear</div>
<svg class="ch" style="top:339px" viewBox="0 0 7 9"><path d="M1.5 1 L5 4.5 L1.5 8" fill="none" stroke="#333" stroke-width="1.6"/></svg>
<div class="mi" style="left:286px;top:362px">Neural Networks</div>
<svg class="ch" style="top:364px" viewBox="0 0 7 9"><path d="M1.5 1 L5 4.5 L1.5 8" fill="none" stroke="#333" stroke-width="1.6"/></svg>
<div class="mi" style="left:286px;top:387px">Classi<u>f</u>y</div>
<svg class="ch" style="top:389px" viewBox="0 0 7 9"><path d="M1.5 1 L5 4.5 L1.5 8" fill="none" stroke="#333" stroke-width="1.6"/></svg>
<div class="mi" style="left:286px;top:412px"><u>D</u>imension Reduction</div>
<svg class="ch" style="top:414px" viewBox="0 0 7 9"><path d="M1.5 1 L5 4.5 L1.5 8" fill="none" stroke="#333" stroke-width="1.6"/></svg>
<div class="mi" style="left:286px;top:437px"><u>M</u>apping</div>
<svg class="ch" style="top:439px" viewBox="0 0 7 9"><path d="M1.5 1 L5 4.5 L1.5 8" fill="none" stroke="#333" stroke-width="1.6"/></svg>
<div class="mi" style="left:286px;top:462px">Sc<u>a</u>le</div>
<svg class="ch" style="top:464px" viewBox="0 0 7 9"><path d="M1.5 1 L5 4.5 L1.5 8" fill="none" stroke="#333" stroke-width="1.6"/></svg>
<div class="mi" style="left:286px;top:487px"><u>N</u>onparametric Tests</div>
<svg class="ch" style="top:489px" viewBox="0 0 7 9"><path d="M1.5 1 L5 4.5 L1.5 8" fill="none" stroke="#333" stroke-width="1.6"/></svg>
<div class="mi" style="left:286px;top:512px">Forecas<u>t</u>ing</div>
<svg class="ch" style="top:514px" viewBox="0 0 7 9"><path d="M1.5 1 L5 4.5 L1.5 8" fill="none" stroke="#333" stroke-width="1.6"/></svg>
<div class="mi" style="left:286px;top:537px"><u>S</u>urvival</div>
<svg class="ch" style="top:539px" viewBox="0 0 7 9"><path d="M1.5 1 L5 4.5 L1.5 8" fill="none" stroke="#333" stroke-width="1.6"/></svg>
<div class="mi" style="left:286px;top:562px">M<u>u</u>ltiple Response</div>
<svg class="ch" style="top:564px" viewBox="0 0 7 9"><path d="M1.5 1 L5 4.5 L1.5 8" fill="none" stroke="#333" stroke-width="1.6"/></svg>
<div class="mi" style="left:284px;top:588px">Missing Value Analysis<span style="letter-spacing:0.7px">...</span></div>
<div class="mi" style="left:286px;top:614px">Mult<u>i</u>ple Imputation</div>
<svg class="ch" style="top:616px" viewBox="0 0 7 9"><path d="M1.5 1 L5 4.5 L1.5 8" fill="none" stroke="#333" stroke-width="1.6"/></svg>
<div class="mi" style="left:286px;top:639px">Comp<u>l</u>ex Samples</div>
<svg class="ch" style="top:641px" viewBox="0 0 7 9"><path d="M1.5 1 L5 4.5 L1.5 8" fill="none" stroke="#333" stroke-width="1.6"/></svg>
<div class="mi" style="left:284px;top:665px">Simulation<span style="letter-spacing:0.7px">...</span></div>
<div class="mi" style="left:286px;top:690px">Quality Control</div>
<svg class="ch" style="top:692px" viewBox="0 0 7 9"><path d="M1.5 1 L5 4.5 L1.5 8" fill="none" stroke="#333" stroke-width="1.6"/></svg>
<div class="a" style="left:531px;top:532px;width:360px;height:1px;background:#d6d6d6"></div>
<div class="a" style="left:890px;top:532px;width:1px;height:168px;background:#d6d6d6"></div>
<div class="a" style="left:531px;top:533px;width:359px;height:180px;background:#f7f7f7;border:2px solid #e8ecfc;border-bottom:none"></div>
<div class="a" style="left:531px;top:698px;width:359px;height:2px;background:#e8ecfc"></div>
<div class="a" style="left:533px;top:562px;width:355px;height:27px;background:#dedede"></div>
<div class="a" style="left:526px;top:559px;width:135px;height:35px;border:4px solid #ffa500"></div>
<div class="a" style="left:533px;top:643px;width:354px;height:1px;background:#bdbdbd"></div>
<div class="si" style="top:541px"><u>L</u>ife Tables<span style="letter-spacing:0.7px">...</span></div>
<div class="si" style="top:568px"><u>K</u>aplan-Meier<span style="letter-spacing:0.7px">...</span></div>
<div class="si" style="top:595px"><u>C</u>ox Regression<span style="letter-spacing:0.7px">...</span></div>
<div class="si" style="top:622px">C<u>o</u>x w/ Time-Dep Cov<span style="letter-spacing:0.7px">...</span></div>
<div class="si" style="top:650px">P<u>a</u>rametric Accelerated Failure Time (AFT) Models<span style="letter-spacing:0.7px">...</span></div>
<div class="si" style="top:677px">Parametric <u>S</u>hared Frailty Models<span style="letter-spacing:0.7px">...</span></div>

<svg class="a" style="left:0;top:0" width="919" height="700" viewBox="0 0 919 700">
<defs>
<linearGradient id="rbar" x1="0" y1="0" x2="0" y2="1"><stop offset="0" stop-color="#f06060"/><stop offset="1" stop-color="#d01818"/></linearGradient>


</defs>
<g transform="translate(536 541)">
<rect x="0.5" y="0.5" width="15" height="15" fill="#6aaee8" stroke="#1a3c9c" stroke-width="1"/>
<rect x="11" y="1" width="3" height="14" fill="#a8d4f8"/>
<rect x="13" y="1" width="1" height="14" fill="#fff"/>
<g fill="#fff"><rect x="2" y="3" width="1.5" height="1"/><rect x="5" y="3" width="1.5" height="1"/><rect x="8" y="3" width="1.5" height="1"/>
<rect x="2" y="6" width="1.5" height="1"/><rect x="5" y="6" width="1.5" height="1"/><rect x="8" y="6" width="1.5" height="1"/>
<rect x="2" y="9" width="1.5" height="1"/><rect x="5" y="9" width="1.5" height="1"/><rect x="8" y="9" width="1.5" height="1"/>
<rect x="2" y="12" width="1.5" height="1"/><rect x="5" y="12" width="1.5" height="1"/><rect x="8" y="12" width="1.5" height="1"/></g>
<g fill="url(#rbar)"><rect x="1" y="1" width="9" height="2"/><rect x="1" y="4" width="12" height="2"/><rect x="1" y="7" width="10" height="2"/><rect x="1" y="10" width="9" height="2"/><rect x="1" y="13" width="10" height="2"/></g>
</g>
<g transform="translate(536 567)">
<rect x="0.5" y="0.5" width="15" height="15" fill="#6aaee8" stroke="#1a3c9c" stroke-width="1"/>
<rect x="11" y="1" width="3" height="14" fill="#a8d4f8"/>
<rect x="13" y="1" width="1" height="14" fill="#fff"/>
<g fill="#fff"><rect x="2" y="3" width="1.5" height="1"/><rect x="5" y="3" width="1.5" height="1"/><rect x="8" y="3" width="1.5" height="1"/>
<rect x="2" y="6" width="1.5" height="1"/><rect x="5" y="6" width="1.5" height="1"/><rect x="8" y="6" width="1.5" height="1"/>
<rect x="2" y="9" width="1.5" height="1"/><rect x="5" y="9" width="1.5" height="1"/><rect x="8" y="9" width="1.5" height="1"/>
<rect x="2" y="12" width="1.5" height="1"/><rect x="5" y="12" width="1.5" height="1"/><rect x="8" y="12" width="1.5" height="1"/></g>
<g fill="url(#rbar)"><rect x="1" y="1" width="9" height="2"/><rect x="1" y="4" width="12" height="2"/><rect x="1" y="7" width="10" height="2"/><rect x="1" y="10" width="9" height="2"/><rect x="1" y="13" width="10" height="2"/></g>
</g>
<g transform="translate(536 594)">
<rect x="0.5" y="0.5" width="15" height="15" fill="#6aaee8" stroke="#1a3c9c" stroke-width="1"/>
<rect x="11" y="1" width="3" height="9" fill="#a8d4f8"/>
<rect x="13" y="1" width="1" height="9" fill="#fff"/>
<g fill="#fff"><rect x="2" y="3" width="1.5" height="1"/><rect x="5" y="3" width="1.5" height="1"/><rect x="8" y="3" width="1.5" height="1"/><rect x="2" y="6" width="1.5" height="1"/><rect x="5" y="6" width="1.5" height="1"/><rect x="8" y="6" width="1.5" height="1"/><rect x="2" y="9" width="1.5" height="1"/><rect x="5" y="9" width="1.5" height="1"/><rect x="8" y="9" width="1.5" height="1"/></g>
<g fill="url(#rbar)"><rect x="1" y="1" width="8" height="2"/><rect x="1" y="4" width="11" height="2"/><rect x="1" y="7" width="10" height="2"/></g>
</g>
<text x="544" y="609.3" font-family="Liberation Sans" font-weight="bold" font-size="7" fill="#ffff20" text-anchor="middle" textLength="13" lengthAdjust="spacingAndGlyphs">COX</text>
<g transform="translate(536 621)">
<rect x="0.5" y="0.5" width="15" height="15" fill="#6aaee8" stroke="#1a3c9c" stroke-width="1"/>
<rect x="11" y="1" width="3" height="9" fill="#a8d4f8"/>
<rect x="13" y="1" width="1" height="9" fill="#fff"/>
<g fill="#fff"><rect x="2" y="3" width="1.5" height="1"/><rect x="5" y="3" width="1.5" height="1"/><rect x="8" y="3" width="1.5" height="1"/><rect x="2" y="6" width="1.5" height="1"/><rect x="5" y="6" width="1.5" height="1"/><rect x="8" y="6" width="1.5" height="1"/><rect x="2" y="9" width="1.5" height="1"/><rect x="5" y="9" width="1.5" height="1"/><rect x="8" y="9" width="1.5" height="1"/></g>
<g fill="url(#rbar)"><rect x="1" y="1" width="8" height="2"/><rect x="1" y="4" width="11" height="2"/><rect x="1" y="7" width="10" height="2"/></g>
</g>
<text x="544" y="636.3" font-family="Liberation Sans" font-weight="bold" font-size="7" fill="#ffff20" text-anchor="middle" textLength="14" lengthAdjust="spacingAndGlyphs">COXT</text>
<g transform="translate(536 650)">
<rect x="0.5" y="0.5" width="15" height="15" fill="#6aaee8" stroke="#1a3c9c" stroke-width="1"/>
<rect x="11" y="1" width="3" height="14" fill="#a8d4f8"/>
<rect x="13" y="1" width="1" height="14" fill="#fff"/>
<g fill="#fff"><rect x="2" y="3" width="1.5" height="1"/><rect x="5" y="3" width="1.5" height="1"/><rect x="8" y="3" width="1.5" height="1"/>
<rect x="2" y="6" width="1.5" height="1"/><rect x="5" y="6" width="1.5" height="1"/><rect x="8" y="6" width="1.5" height="1"/>
<rect x="2" y="9" width="1.5" height="1"/><rect x="5" y="9" width="1.5" height="1"/><rect x="8" y="9" width="1.5" height="1"/>
<rect x="2" y="12" width="1.5" height="1"/><rect x="5" y="12" width="1.5" height="1"/><rect x="8" y="12" width="1.5" height="1"/></g>
<g fill="url(#rbar)"><rect x="1" y="1" width="9" height="2"/><rect x="1" y="4" width="12" height="2"/><rect x="1" y="7" width="10" height="2"/><rect x="1" y="10" width="9" height="2"/><rect x="1" y="13" width="10" height="2"/></g>
</g>
<circle cx="546.5" cy="658.5" r="4.3" fill="#20c020"/>
<g transform="translate(536 677)">
<rect x="0.5" y="0.5" width="15" height="15" fill="#6aaee8" stroke="#1a3c9c" stroke-width="1"/>
<rect x="11" y="1" width="3" height="14" fill="#a8d4f8"/>
<rect x="13" y="1" width="1" height="14" fill="#fff"/>
<g fill="#fff"><rect x="2" y="3" width="1.5" height="1"/><rect x="5" y="3" width="1.5" height="1"/><rect x="8" y="3" width="1.5" height="1"/>
<rect x="2" y="6" width="1.5" height="1"/><rect x="5" y="6" width="1.5" height="1"/><rect x="8" y="6" width="1.5" height="1"/>
<rect x="2" y="9" width="1.5" height="1"/><rect x="5" y="9" width="1.5" height="1"/><rect x="8" y="9" width="1.5" height="1"/>
<rect x="2" y="12" width="1.5" height="1"/><rect x="5" y="12" width="1.5" height="1"/><rect x="8" y="12" width="1.5" height="1"/></g>
<g fill="url(#rbar)"><rect x="1" y="1" width="9" height="2"/><rect x="1" y="4" width="12" height="2"/><rect x="1" y="7" width="10" height="2"/><rect x="1" y="10" width="9" height="2"/><rect x="1" y="13" width="10" height="2"/></g>
</g>
<rect x="542.8" y="678" width="3.8" height="14" fill="#000"/>
<!-- lock -->
<path d="M269.6 593.5 V590 Q269.6 587.5 272 587.5 Q274.4 587.5 274.4 590 V593.5" fill="none" stroke="#000" stroke-width="1.2"/>
<rect x="266.2" y="593.1" width="11.6" height="9.8" rx="2" fill="#100000"/>
<rect x="271" y="597" width="2.2" height="2.4" fill="#fff"/>
<!-- simulation -->
<rect x="264.6" y="664.6" width="12" height="12" fill="#fff" stroke="#1a6fd8" stroke-width="1.2"/>
<path d="M268.6 664.6 V676.6 M272.6 664.6 V676.6 M264.6 667.6 H276.6 M264.6 670.6 H276.6 M264.6 673.6 H276.6" stroke="#1a6fd8" stroke-width="1"/>
<rect x="268.7" y="670.6" width="10.8" height="9" fill="#eef4fc" stroke="#1a6fd8" stroke-width="1.2"/>
<path d="M271 673.4 H277 M272 675.4 H275 M272.5 677.4 H275 M274.5 672.6 Q273.5 675.5 274.5 679.5" fill="none" stroke="#1a6fd8" stroke-width="0.9"/>
</svg>

</body></html>
